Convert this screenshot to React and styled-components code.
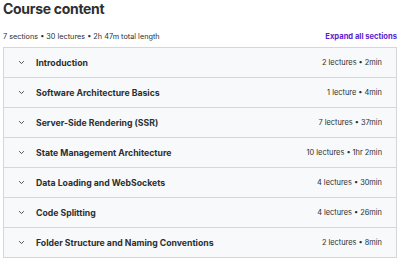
import React from 'react'
import styled, { createGlobalStyle } from 'styled-components'

const GlobalStyle = createGlobalStyle`
    body {
        margin: 0;
        background: #ffffff;
        font-family: "Inter", "Liberation Sans", sans-serif;
        color: #2d2f31;
    }
`

const Page = styled.div`
    width: 400px;
    height: 261px;
    padding: 0 3px;
    box-sizing: border-box;
    overflow: hidden;
`

const Title = styled.h2`
    font-size: 14px;
    font-weight: 700;
    margin: 0;
    line-height: 17px;
    letter-spacing: -0.3px;
`

const InfoBar = styled.div`
    display: flex;
    justify-content: space-between;
    align-items: center;
    margin-top: 13px;
    height: 12px;
    margin-bottom: 5px;
`

const Meta = styled.span`
    font-size: 7.3px;
    color: #2d2f31;
`

const ExpandAll = styled.button`
    background: none;
    border: none;
    padding: 0;
    font-family: inherit;
    font-size: 7.6px;
    font-weight: 700;
    color: #5624d0;
    cursor: pointer;
`

const Panel = styled.div`
    border: 1px solid #d1d7dc;
    border-bottom: none;
`

const Row = styled.div`
    display: flex;
    align-items: center;
    height: 29px;
    padding: 0 14px;
    background: #f7f9fa;
    border-bottom: 1px solid #d1d7dc;
`

const Chevron = styled.svg`
    width: 7px;
    height: 7px;
    margin-right: 11px;
    flex-shrink: 0;
`

const SectionTitle = styled.span`
    flex: 1;
    font-size: 8.7px;
    font-weight: 700;
    color: #2d2f31;
`

const SectionInfo = styled.span`
    font-size: 7.4px;
    color: #2d2f31;
`

const sections = [
    { title: 'Introduction', info: '2 lectures • 2min' },
    { title: 'Software Architecture Basics', info: '1 lecture • 4min' },
    { title: 'Server-Side Rendering (SSR)', info: '7 lectures • 37min' },
    { title: 'State Management Architecture', info: '10 lectures • 1hr 2min' },
    { title: 'Data Loading and WebSockets', info: '4 lectures • 30min' },
    { title: 'Code Splitting', info: '4 lectures • 26min' },
    { title: 'Folder Structure and Naming Conventions', info: '2 lectures • 8min' },
]

const App = () => {
    return (
        <Page>
            <GlobalStyle />
            <Title>Course content</Title>
            <InfoBar>
                <Meta>7 sections • 30 lectures • 2h 47m total length</Meta>
                <ExpandAll>Expand all sections</ExpandAll>
            </InfoBar>
            <Panel>
                {sections.map((s) => (
                    <Row key={s.title}>
                        <Chevron viewBox="0 0 10 10">
                            <path d="M2 3.5 L5 6.5 L8 3.5" fill="none" stroke="#2d2f31" strokeWidth="1.2" strokeLinecap="round" strokeLinejoin="round" />
                        </Chevron>
                        <SectionTitle>{s.title}</SectionTitle>
                        <SectionInfo>{s.info}</SectionInfo>
                    </Row>
                ))}
            </Panel>
        </Page>
    )
}

export default App
